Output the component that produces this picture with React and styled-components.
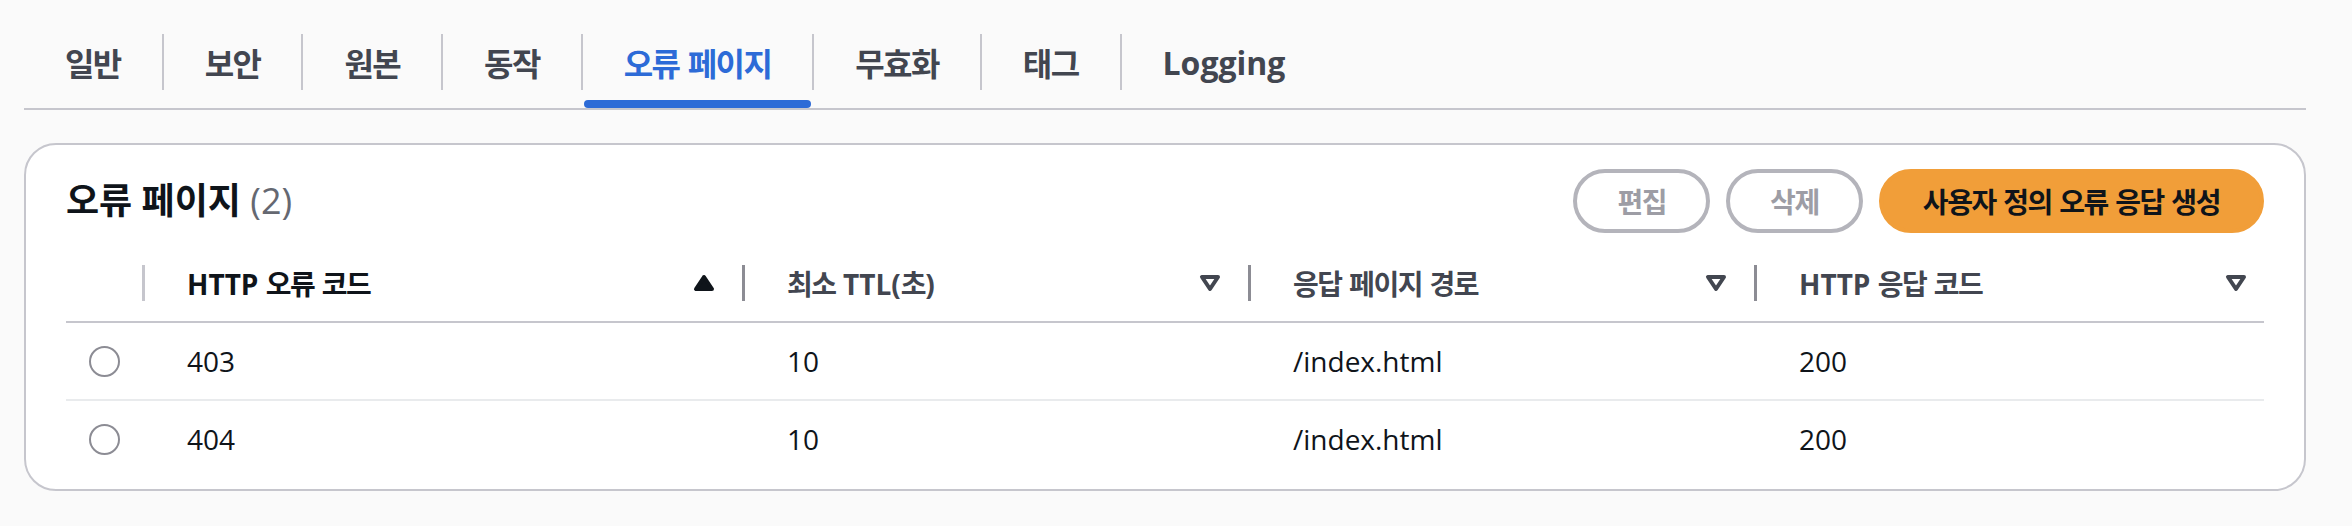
import React from 'react';
import styled, { createGlobalStyle } from 'styled-components';

const GlobalStyle = createGlobalStyle`
  body {
    margin: 0;
    background: #fafafa;
    font-family: "Open Sans", "Noto Sans CJK KR", sans-serif;
    color: #0f141a;
  }
`;

const HANGUL = /([\uAC00-\uD7A3]+)/;

const Ko = styled.span`
  letter-spacing: -0.05em;
`;

// wrap hangul runs so they get the tighter spacing of the original font
const ko = (text) =>
  text.split(HANGUL).map((part, i) =>
    HANGUL.test(part) ? <Ko key={i}>{part}</Ko> : part
  );

const Page = styled.div`
  padding: 0 46px 35px 24px;
`;

const TabList = styled.div`
  display: flex;
  border-bottom: 2px solid #c6c6cd;
`;

const Tab = styled.div`
  display: flex;
  flex-direction: column;
  padding-top: 34px;
`;

const TabLabel = styled.div`
  height: 56px;
  padding: 0 41px;
  display: flex;
  align-items: center;
  font-size: 32px;
  font-weight: 700;
  color: ${(p) => (p.$active ? '#2d6bd7' : '#424650')};
  white-space: nowrap;
`;

const TabIndicator = styled.div`
  height: 8px;
  margin: 10px 1px 0;
  border-radius: 8px;
  background: ${(p) => (p.$active ? '#2d6bd7' : 'transparent')};
`;

const TabDivider = styled.div`
  width: 2px;
  height: 56px;
  margin-top: 34px;
  background: #c6c6cd;
`;

const Panel = styled.section`
  margin-top: 33px;
  background: #fff;
  border: 2px solid #c6c6cd;
  border-radius: 32px;
  padding: 24px 40px 12px;
`;

const PanelHeader = styled.div`
  display: flex;
  align-items: center;
  justify-content: space-between;
  height: 64px;
`;

const Title = styled.h2`
  margin: 0;
  font-size: 36px;
  line-height: 44px;
  font-weight: 700;
  color: #0f141a;
`;

const Counter = styled.span`
  font-weight: 400;
  color: #656871;
`;

const Actions = styled.div`
  display: flex;
  gap: 16px;
`;

const Button = styled.button`
  height: 64px;
  padding: 0 40px;
  border-radius: 32px;
  border: 4px solid ${(p) => (p.$primary ? '#f19e39' : '#b4b4bb')};
  background: ${(p) => (p.$primary ? '#f19e39' : '#fff')};
  color: ${(p) => (p.$primary ? '#0f141a' : '#9d9da5')};
  font-family: inherit;
  font-size: 28px;
  font-weight: 700;
  white-space: nowrap;
`;

const COLUMNS = '79px 600px 506px 506px 1fr';

const HeadRow = styled.div`
  display: grid;
  grid-template-columns: ${COLUMNS};
  height: 76px;
  margin-top: 12px;
  border-bottom: 2px solid #c6c6cd;
`;

const HeadCell = styled.div`
  display: flex;
  align-items: center;
  padding-left: ${(p) => (p.$select ? '0' : '42px')};
  padding-right: ${(p) => (p.$last ? '12px' : '0')};
  justify-content: ${(p) => (p.$select ? 'flex-end' : 'flex-start')};
`;

const HeadLabel = styled.span`
  flex: 1;
  font-size: 28px;
  font-weight: 700;
  color: ${(p) => (p.$sorted ? '#0f141a' : '#424650')};
  white-space: nowrap;
`;

const ColDivider = styled.span`
  width: 3px;
  height: 36px;
  margin-left: ${(p) => (p.$select ? '0' : '22px')};
  background: ${(p) => (p.$light ? '#c6c6cd' : '#8c8c94')};
`;

const Row = styled.div`
  display: grid;
  grid-template-columns: ${COLUMNS};
  height: 76px;

  & + & {
    border-top: 2px solid #e9ebed;
  }
`;

const Cell = styled.div`
  display: flex;
  align-items: center;
  padding-left: 42px;
  font-size: 28px;
  color: #0f141a;
`;

const SelectCell = styled.div`
  display: flex;
  align-items: center;
  justify-content: center;
  padding-right: 2px;
`;

const Radio = styled.span`
  width: 31px;
  height: 31px;
  box-sizing: border-box;
  border: 2px solid #8c8c94;
  border-radius: 50%;
  background: #fff;
`;

const SortIcon = ({ dir }) => (
  <svg width="32" height="32" viewBox="0 0 16 16" aria-hidden="true">
    {dir === 'asc' ? (
      <path d="M4 11h8L8 5l-4 6z" fill="#0f141a" stroke="#0f141a" strokeWidth="2" strokeLinejoin="round" />
    ) : (
      <path d="M4 5h8l-4 6-4-6z" fill="none" stroke="#424650" strokeWidth="2" strokeLinejoin="round" />
    )}
  </svg>
);

const tabs = ['일반', '보안', '원본', '동작', '오류 페이지', '무효화', '태그', 'Logging'];
const activeTab = '오류 페이지';

const columns = [
  { label: 'HTTP 오류 코드', sort: 'asc' },
  { label: '최소 TTL(초)' },
  { label: '응답 페이지 경로' },
  { label: 'HTTP 응답 코드' },
];

const rows = [
  { code: '403', ttl: '10', path: '/index.html', status: '200' },
  { code: '404', ttl: '10', path: '/index.html', status: '200' },
];

export default function App() {
  return (
    <Page>
      <GlobalStyle />
      <TabList>
        {tabs.map((t, i) => (
          <React.Fragment key={t}>
            {i > 0 && <TabDivider />}
            <Tab>
              <TabLabel $active={t === activeTab}>
                <span>{ko(t)}</span>
              </TabLabel>
              <TabIndicator $active={t === activeTab} />
            </Tab>
          </React.Fragment>
        ))}
      </TabList>

      <Panel>
        <PanelHeader>
          <Title>
            오류 페이지 <Counter>(2)</Counter>
          </Title>
          <Actions>
            <Button>{ko('편집')}</Button>
            <Button>{ko('삭제')}</Button>
            <Button $primary>{ko('사용자 정의 오류 응답 생성')}</Button>
          </Actions>
        </PanelHeader>

        <HeadRow>
          <HeadCell $select>
            <ColDivider $select $light />
          </HeadCell>
          {columns.map((c, i) => {
            const last = i === columns.length - 1;
            return (
              <HeadCell key={c.label} $last={last}>
                <HeadLabel $sorted={!!c.sort}>{ko(c.label)}</HeadLabel>
                <SortIcon dir={c.sort} />
                {!last && <ColDivider />}
              </HeadCell>
            );
          })}
        </HeadRow>

        {rows.map((r) => (
          <Row key={r.code}>
            <SelectCell>
              <Radio />
            </SelectCell>
            <Cell>{r.code}</Cell>
            <Cell>{r.ttl}</Cell>
            <Cell>{r.path}</Cell>
            <Cell>{r.status}</Cell>
          </Row>
        ))}
      </Panel>
    </Page>
  );
}
